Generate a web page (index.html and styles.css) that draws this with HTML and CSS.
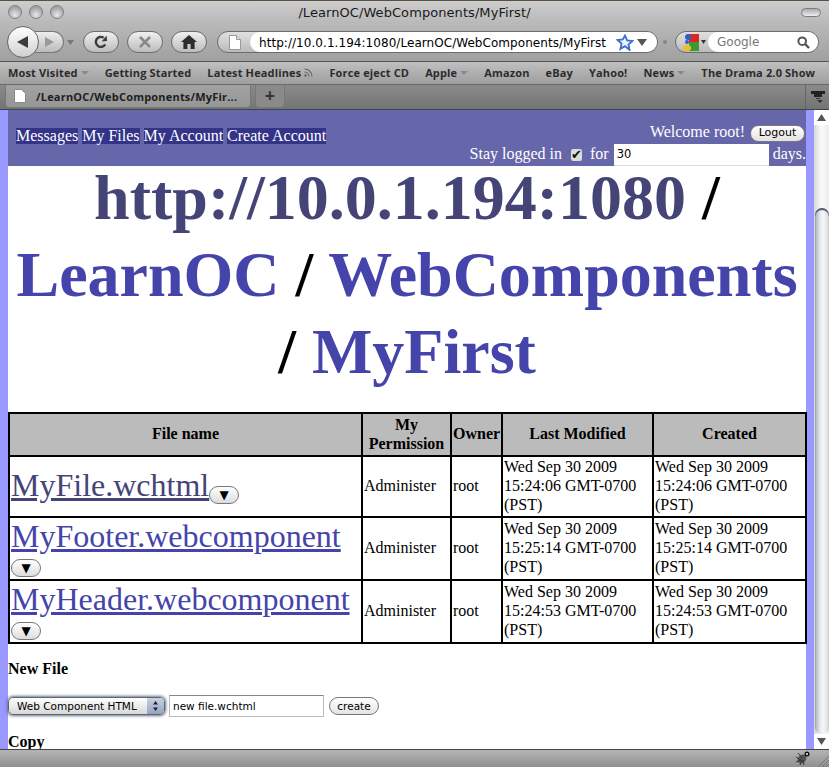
FILE: index.html
```html
<!DOCTYPE html>
<html lang="en">
<head>
  <meta charset="UTF-8">
  <title>/LearnOC/WebComponents/MyFirst/</title>
  <link rel="stylesheet" href="styles.css">
</head>
<body>
  <div class="window">
    <div class="titlebar">
      <div class="lights">
        <span class="light"></span>
        <span class="light"></span>
        <span class="light"></span>
      </div>
      <div class="title">/LearnOC/WebComponents/MyFirst/</div>
      <div class="title-right"><span class="toolbar-pill"></span></div>
    </div>

    <div class="toolbar">
      <div class="nav-group">
        <button class="back">
          <svg width="16" height="16" viewBox="0 0 16 16"><path d="M13 2v12L2 8z" fill="#3c3c3c"/></svg>
        </button>
        <button class="forward">
          <svg width="12" height="12" viewBox="0 0 12 12"><path d="M2 1v10l9-5z" fill="#999"/></svg>
        </button>
      </div>
      <svg class="caret" width="7" height="5" viewBox="0 0 7 5"><path d="M0 0h7L3.5 5z" fill="#777"/></svg>
      <button class="tool reload">
        <svg width="16" height="16" viewBox="0 0 16 16"><path d="M12.2 10.4A5 5 0 1 1 10.6 3.7" fill="none" stroke="#3c3c3c" stroke-width="2.4"/><path d="M8.6 7.4l5.4-.4-.4-5.4z" fill="#3c3c3c"/></svg>
      </button>
      <button class="tool stop">
        <svg width="14" height="14" viewBox="0 0 14 14"><path d="M2 2l10 10M12 2L2 12" stroke="#888" stroke-width="2.6"/></svg>
      </button>
      <button class="tool home">
        <svg width="16" height="14" viewBox="0 0 16 14"><path d="M8 0l8 7h-2.400v7H9.600V9H6.400v5H2.400V7H0z" fill="#2e2e2e"/></svg>
      </button>
      <div class="urlbar">
        <div class="site-icon">
          <svg width="12" height="15" viewBox="0 0 12 15"><path d="M.5.5h7l4 4v10H.5z" fill="#fff" stroke="#999"/><path d="M7.500.5v4h4" fill="#ddd" stroke="#999"/></svg>
        </div>
        <div class="url-field">
          <span class="url-text">http://10.0.1.194:1080/LearnOC/WebComponents/MyFirst</span>
          <svg width="18" height="17" viewBox="0 0 18 17"><path d="M9 1.500l2.200 4.900 5.300.6-4 3.600 1.100 5.300L9 12.200l-4.600 2.700 1.100-5.300-4-3.600 5.300-.6z" fill="#eef3fc" stroke="#3b6fd0" stroke-width="1.800"/></svg>
          <svg width="10" height="7" viewBox="0 0 10 7"><path d="M0 0h10L5 7z" fill="#555"/></svg>
        </div>
      </div>
      <span class="grip"></span>
      <div class="searchbar">
        <div class="engine">
          <svg width="16" height="17" viewBox="0 0 16 17">
            <rect x="6" y="0" width="10" height="8" fill="#d62a20"/>
            <rect x="6" y="8" width="10" height="9" fill="#3a9a35"/>
            <rect x="0" y="11" width="8" height="6" rx="3" fill="#f0bd2a"/>
            <circle cx="5" cy="3" r="3" fill="#2a5fd0"/>
            <circle cx="4" cy="8" r="2" fill="#2a5fd0"/>
          </svg>
          <svg width="5" height="4" viewBox="0 0 5 4"><path d="M0 0h5L2.500 4z" fill="#333"/></svg>
        </div>
        <div class="search-field">
          <span class="search-text">Google</span>
          <svg width="13" height="13" viewBox="0 0 13 13"><circle cx="5.200" cy="5.200" r="3.800" fill="none" stroke="#555" stroke-width="2"/><path d="M8 8l4 4" stroke="#555" stroke-width="2.400"/></svg>
        </div>
      </div>
    </div>

    <div class="bookmarks">
      <span class="bookmark">Most Visited <i class="mini-caret"></i></span>
      <span class="bookmark">Getting Started</span>
      <span class="bookmark">Latest Headlines
        <svg width="9" height="9" viewBox="0 0 9 9"><circle cx="1.500" cy="7.500" r="1.200" fill="#666"/><path d="M.5 4a4.500 4.500 0 0 1 4.500 4.500M.5 1a7.500 7.500 0 0 1 7.500 7.500" fill="none" stroke="#666" stroke-width="1.200"/></svg>
      </span>
      <span class="bookmark">Force eject CD</span>
      <span class="bookmark">Apple <i class="mini-caret"></i></span>
      <span class="bookmark">Amazon</span>
      <span class="bookmark">eBay</span>
      <span class="bookmark">Yahoo!</span>
      <span class="bookmark">News <i class="mini-caret"></i></span>
      <span class="bookmark">The Drama 2.0 Show</span>
    </div>

    <div class="tabbar">
      <div class="tab">
        <svg width="12" height="14" viewBox="0 0 12 14"><path d="M.5.5h7l4 4v9H.5z" fill="#fff" stroke="#888"/></svg>
        <span>/LearnOC/WebComponents/MyFir...</span>
      </div>
      <div class="new-tab">+</div>
      <div class="tab-end">
        <svg width="14" height="12" viewBox="0 0 14 12"><path d="M0 0h14v3h-3v3H3V3H0z" fill="#222"/><path d="M5 7h4v1H5zM6 9h6l-3 3z" fill="#333"/></svg>
      </div>
    </div>

    <div class="viewport">
      <div class="page">
        <div class="page-inner">
          <div class="site-header">
            <div class="site-nav">
              <a>Messages</a>
              <a>My Files</a>
              <a>My Account</a>
              <a>Create Account</a>
            </div>
            <div class="login-box">
              <div class="welcome">Welcome root! <button class="logout">Logout</button></div>
              <div class="stay">Stay logged in <span class="check">&#10004;</span> for <span class="days-input">30</span> days.</div>
            </div>
          </div>

          <h1 class="crumbs"><a class="visited">http://10.0.1.194:1080</a> / <a>LearnOC</a> / <a>WebComponents</a> / <a>MyFirst</a></h1>

          <table class="files">
            <colgroup>
              <col class="col-name">
              <col class="col-perm">
              <col class="col-owner">
              <col class="col-date">
              <col class="col-date2">
            </colgroup>
            <thead>
              <tr>
                <th>File name</th>
                <th>My Permission</th>
                <th>Owner</th>
                <th>Last Modified</th>
                <th>Created</th>
              </tr>
            </thead>
            <tbody>
              <tr>
                <td><a class="file-link visited-file">MyFile.wchtml</a><button class="menu-btn">&#9660;</button></td>
                <td>Administer</td>
                <td>root</td>
                <td>Wed Sep 30 2009 15:24:06 GMT-0700 (PST)</td>
                <td>Wed Sep 30 2009 15:24:06 GMT-0700 (PST)</td>
              </tr>
              <tr>
                <td><a class="file-link">MyFooter.webcomponent</a> <button class="menu-btn">&#9660;</button></td>
                <td>Administer</td>
                <td>root</td>
                <td>Wed Sep 30 2009 15:25:14 GMT-0700 (PST)</td>
                <td>Wed Sep 30 2009 15:25:14 GMT-0700 (PST)</td>
              </tr>
              <tr>
                <td><a class="file-link">MyHeader.webcomponent</a> <button class="menu-btn">&#9660;</button></td>
                <td>Administer</td>
                <td>root</td>
                <td>Wed Sep 30 2009 15:24:53 GMT-0700 (PST)</td>
                <td>Wed Sep 30 2009 15:24:53 GMT-0700 (PST)</td>
              </tr>
            </tbody>
          </table>

          <h4 class="section-title">New File</h4>
          <div class="new-file">
            <div class="select">
              <span>Web Component HTML</span>
              <span class="select-arrows">
                <svg width="7" height="12" viewBox="0 0 7 12"><path d="M3.500 1L6 4.500H1zM3.500 11L1 7.500h5z" fill="#222"/></svg>
              </span>
            </div>
            <span class="name-input">new file.wchtml</span>
            <button class="create">create</button>
          </div>
          <h4 class="section-title copy-title">Copy</h4>
        </div>
      </div>
      <div class="scrollbar">
        <div class="arrow-cap"><svg width="9" height="7" viewBox="0 0 9 7"><path d="M4.500 0L9 7H0z" fill="#555"/></svg></div>
        <div class="track-top"></div>
        <div class="thumb"></div>
        <div class="arrow-cap"><svg width="9" height="7" viewBox="0 0 9 7"><path d="M4.500 7L0 0h9z" fill="#555"/></svg></div>
      </div>
    </div>

    <div class="statusbar">
      <svg class="bug" width="16" height="15" viewBox="0 0 16 15"><ellipse cx="7" cy="8" rx="4" ry="5" transform="rotate(40 7 8)" fill="#555"/><circle cx="12" cy="3" r="2.500" fill="#111"/><circle cx="12" cy="3" r="1" fill="#fff"/><path d="M1 6l5 3M3 2l4 5M1 11l5-2M5 14l2-5M9 14L8 9" stroke="#333"/></svg>
      <svg class="resize" width="12" height="12" viewBox="0 0 12 12"><path d="M12 1L1 12M12 5l-7 7M12 9l-3 3" stroke="#777"/></svg>
    </div>
  </div>
</body>
</html>
```

FILE: styles.css
```css
html, body {
  margin: 0;
  padding: 0;
}
body {
  width: 829px;
  height: 767px;
  overflow: hidden;
  font-family: "Liberation Serif", serif;
  font-size: 16px;
  color: #000;
}
button {
  padding: 0;
  margin: 0;
  cursor: default;
}
.window {
  width: 829px;
  height: 767px;
  display: flex;
  flex-direction: column;
  overflow: hidden;
  background: #b0b0b0;
}

/* title bar */
.titlebar {
  height: 23px;
  display: grid;
  grid-template-columns: 1fr auto 1fr;
  align-items: center;
  background: linear-gradient(#cdcdcd, #b9b9b9);
  border-top: 1px solid #5a5040;
  box-sizing: border-box;
  font-family: "DejaVu Sans", sans-serif;
}
.lights {
  display: flex;
  gap: 7px;
  padding-left: 8px;
}
.light {
  width: 14px;
  height: 14px;
  border-radius: 50%;
  box-sizing: border-box;
  border: 1px solid #808080;
  background: radial-gradient(circle at 50% 75%, #e8e8e8, #a4a4a4 70%);
}
.title {
  font-size: 13px;
  letter-spacing: 0.07px;
  color: #1a1a1a;
}
.title-right {
  display: flex;
  justify-content: flex-end;
  padding-right: 8px;
}
.toolbar-pill {
  width: 20px;
  height: 9px;
  border-radius: 5px;
  border: 1px solid #7c7c7c;
  box-sizing: border-box;
  background: linear-gradient(#aaa, #eee);
}

/* toolbar */
.toolbar {
  height: 39px;
  display: flex;
  align-items: center;
  box-sizing: border-box;
  padding-left: 7px;
  background: linear-gradient(#b9b9b9, #a0a0a0);
  border-bottom: 1px solid #555;
  font-family: "DejaVu Sans", sans-serif;
}
.nav-group {
  display: flex;
  align-items: center;
  width: 57px;
}
.back {
  width: 32px;
  height: 32px;
  border-radius: 50%;
  border: 1px solid #666;
  background: linear-gradient(#fff, #d0d0d0);
  display: flex;
  align-items: center;
  justify-content: center;
  position: relative;
  z-index: 1;
  box-sizing: border-box;
}
.forward {
  width: 29px;
  height: 22px;
  margin-left: -4px;
  border: 1px solid #777;
  border-left: 0;
  border-radius: 0 11px 11px 0;
  background: linear-gradient(#eee, #bbb);
  display: flex;
  align-items: center;
  justify-content: center;
  box-sizing: border-box;
}
.caret {
  margin: 0 9px 0 3px;
}
.tool {
  width: 36px;
  height: 22px;
  margin-right: 8px;
  border-radius: 11px;
  border: 1px solid #6c6c6c;
  background: linear-gradient(#f0f0f0, #bcbcbc);
  display: flex;
  align-items: center;
  justify-content: center;
  box-sizing: border-box;
}
.home {
  margin-right: 10px;
}
.urlbar {
  width: 441px;
  height: 22px;
  display: flex;
  border-radius: 11px;
  border: 1px solid #6c6c6c;
  box-sizing: border-box;
  background: linear-gradient(#e0e0e0, #bbb);
}
.site-icon {
  width: 32px;
  flex: none;
  display: flex;
  align-items: center;
  padding-left: 11px;
  box-sizing: border-box;
}
.url-field {
  flex: 1;
  display: flex;
  align-items: center;
  background: #fff;
  border-radius: 11px;
  padding: 0 10px 0 9px;
  gap: 3px;
}
.url-text {
  flex: 1;
  font-size: 12px;
  letter-spacing: 0.05px;
  padding-top: 1px;
  color: #000;
  white-space: nowrap;
}
.grip {
  width: 4px;
  height: 4px;
  margin: 0 8px 0 5px;
  border-radius: 2px;
  background: #888;
}
.searchbar {
  width: 144px;
  height: 22px;
  display: flex;
  border-radius: 11px;
  border: 1px solid #6c6c6c;
  box-sizing: border-box;
  background: linear-gradient(#e0e0e0, #bbb);
}
.engine {
  width: 32px;
  flex: none;
  display: flex;
  align-items: center;
  gap: 2px;
  padding-left: 7px;
  box-sizing: border-box;
}
.search-field {
  flex: 1;
  display: flex;
  align-items: center;
  justify-content: space-between;
  background: #fff;
  border-radius: 11px;
  padding: 0 8px 0 9px;
}
.search-text {
  font-size: 12px;
  color: #777;
}

/* bookmarks */
.bookmarks {
  height: 23px;
  display: flex;
  align-items: center;
  gap: 16px;
  box-sizing: border-box;
  padding: 0 0 2px 8px;
  background: linear-gradient(#c0c0c0, #9e9e9e);
  border-bottom: 1px solid #6a6a6a;
  font-family: "Open Sans", sans-serif;
  font-size: 11px;
  font-weight: 700;
  letter-spacing: 0.15px;
  color: #2c2c2c;
}
.bookmark {
  white-space: nowrap;
}
.mini-caret {
  display: inline-block;
  width: 0;
  height: 0;
  margin: 0 0 2px 0;
  border-left: 4px solid transparent;
  border-right: 4px solid transparent;
  border-top: 4px solid #8a8a8a;
}

/* tabs */
.tabbar {
  height: 25px;
  display: flex;
  align-items: flex-start;
  box-sizing: border-box;
  padding-left: 5px;
  background: linear-gradient(#8a8a8a, #747474);
  border-bottom: 1px solid #444;
  font-family: "Open Sans", sans-serif;
  font-size: 11px;
  font-weight: 700;
  color: #1e1e1e;
}
.tab {
  width: 246px;
  height: 23px;
  display: flex;
  align-items: center;
  gap: 10px;
  padding-left: 8px;
  box-sizing: border-box;
  background: linear-gradient(#a2a2a2, #969696);
  border: 1px solid #777;
  border-top: 0;
  border-radius: 0 0 4px 4px;
  letter-spacing: 0.2px;
  white-space: nowrap;
}
.new-tab {
  width: 30px;
  height: 23px;
  margin-left: 4px;
  box-sizing: border-box;
  text-align: center;
  line-height: 20px;
  font-size: 18px;
  color: #333;
  background: #8a8a8a;
  border: 1px solid #777;
  border-top: 0;
  border-radius: 0 0 4px 4px;
}
.tab-end {
  margin-left: auto;
  width: 23px;
  height: 24px;
  display: flex;
  align-items: center;
  justify-content: center;
  border-left: 1px solid #666;
}

/* page area */
.viewport {
  flex: 1;
  min-height: 0;
  display: flex;
}
.page {
  flex: 1;
  min-width: 0;
  overflow: hidden;
  background: #9999ff;
  padding: 0 8px;
}
.page-inner {
  height: 100%;
  background: #fff;
}
.site-header {
  height: 56px;
  display: flex;
  justify-content: space-between;
  box-sizing: border-box;
  background: #6666aa;
  color: #fff;
}
.site-nav {
  display: flex;
  gap: 4px;
  padding: 18px 0 0 8px;
}
.site-nav a {
  height: 16px;
  line-height: 16px;
  background: #333388;
  color: #fff;
}
.login-box {
  text-align: right;
  line-height: 20px;
}
.welcome {
  padding-top: 12px;
  height: 22px;
}
.logout {
  width: 55px;
  height: 17px;
  vertical-align: 1px;
  margin-left: 1px;
  margin-right: 1px;
  border-radius: 9px;
  border: 1px solid #777;
  background: linear-gradient(#fff, #e2e2e2);
  font-family: "DejaVu Sans", sans-serif;
  font-size: 11px;
  line-height: 14px;
  color: #000;
}
.stay {
  white-space: nowrap;
}
.check {
  display: inline-block;
  width: 11px;
  height: 12px;
  margin: 0 4px 0 5px;
  line-height: 12px;
  font-size: 13px;
  color: #111;
  background: #dcdcdc;
  border-radius: 2px;
  font-family: "DejaVu Sans", sans-serif;
  text-align: center;
}
.days-input {
  display: inline-block;
  width: 155px;
  height: 22px;
  box-sizing: border-box;
  padding-left: 3px;
  margin-left: 1px;
  line-height: 21px;
  vertical-align: top;
  background: #fff;
  border-bottom: 1px solid #ddd;
  color: #000;
  text-align: left;
  font-family: "DejaVu Sans", sans-serif;
  font-size: 11.5px;
}
.crumbs {
  margin: -7px 0 22px;
  font-size: 64px;
  line-height: 77px;
  text-align: center;
  font-weight: 700;
}
.crumbs a, .file-link {
  color: #4444aa;
}
.crumbs a.visited, .file-link.visited-file {
  color: #444477;
}

/* file table */
.files {
  width: 797px;
  table-layout: fixed;
  border-collapse: collapse;
  border: 2px solid #000;
}
.col-name { width: 353px; }
.col-perm { width: 89px; }
.col-owner { width: 51px; }
.col-date { width: 151px; }
.col-date2 { width: 153px; }
.files th, .files td {
  border: 2px solid #000;
  padding: 0 1px 2px;
  line-height: 19px;
}
.files th {
  height: 39px;
  background: #bbbbbb;
  line-height: 19px;
}
.file-link {
  font-size: 32px;
  line-height: 36px;
  text-decoration: underline;
}
.menu-btn {
  width: 30px;
  height: 18px;
  border-radius: 9px;
  border: 1px solid #777;
  background: linear-gradient(#fff, #ddd);
  font-family: "DejaVu Sans", sans-serif;
  font-size: 12px;
  line-height: 14px;
  color: #000;
  vertical-align: -3px;
}
.section-title {
  margin: 16px 0 0;
  font-size: 16px;
  line-height: 18px;
  font-weight: 700;
}

/* new file form */
.new-file {
  display: flex;
  align-items: center;
  margin: 17px 0 0;
  height: 22px;
  font-family: "DejaVu Sans", sans-serif;
  font-size: 10.5px;
}
.select {
  width: 157px;
  height: 18px;
  display: flex;
  align-items: center;
  justify-content: space-between;
  box-sizing: border-box;
  padding-left: 8px;
  border-radius: 5px;
  border: 1px solid #666;
  background: linear-gradient(#fff, #d8d8d8);
  box-shadow: 0 0 3px 1px #5f7396;
}
.select-arrows {
  width: 17px;
  height: 16px;
  display: flex;
  align-items: center;
  justify-content: center;
  background: linear-gradient(#c8d2e4, #94a4c0);
  border-radius: 0 4px 4px 0;
}
.name-input {
  width: 155px;
  height: 22px;
  margin-left: 4px;
  padding-left: 3px;
  box-sizing: border-box;
  line-height: 20px;
  background: #fff;
  border: 1px solid #bbb;
  border-top-color: #888;
}
.create {
  width: 50px;
  height: 18px;
  margin-left: 5px;
  border-radius: 9px;
  border: 1px solid #777;
  background: linear-gradient(#fff, #e4e4e4);
  font-family: "DejaVu Sans", sans-serif;
  font-size: 10.5px;
  line-height: 14px;
  color: #000;
}

/* scrollbar */
.scrollbar {
  width: 15px;
  flex: none;
  display: flex;
  flex-direction: column;
  background: linear-gradient(90deg, #d8d8d8, #fafafa 50%, #ececec);
}
.arrow-cap {
  height: 15px;
  flex: none;
  display: flex;
  align-items: center;
  justify-content: center;
  background: #fff;
}
.track-top {
  height: 83px;
  flex: none;
}
.thumb {
  flex: 1;
  margin-left: 1px;
  border-radius: 8px;
  background: linear-gradient(90deg, #a6aeb8, #e6e8ec 35%, #f6f6f8 60%, #dadada);
  box-shadow: inset 0 2px 1px #4a5566;
}

/* status bar */
.statusbar {
  height: 18px;
  flex: none;
  display: flex;
  align-items: center;
  justify-content: flex-end;
  gap: 6px;
  box-sizing: border-box;
  border-top: 1px solid #444;
  background: linear-gradient(#b4b4b4, #909090);
}
.resize {
  align-self: flex-end;
}
```
